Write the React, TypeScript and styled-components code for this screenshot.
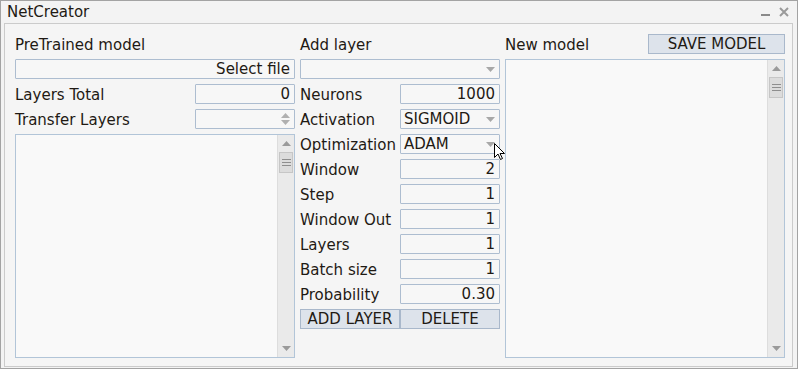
import React from "react";
import styled, { createGlobalStyle } from "styled-components";

const Global = createGlobalStyle`
  html, body { margin: 0; padding: 0; background: #ffffff; }
  * { box-sizing: border-box; }
`;

const FONT = `"DejaVu Sans", "Liberation Sans", sans-serif`;

const Window = styled.div`
  position: relative;
  width: 798px;
  height: 369px;
  border: 1px solid #a3a3a3;
  background: #f3f3f3;
  display: flex;
  flex-direction: column;
  padding: 0 4px 1px 3px;
  font-family: ${FONT};
  color: #1f1a14;
`;

const TitleBar = styled.div`
  height: 22px;
  display: flex;
  align-items: center;
  justify-content: space-between;
  padding: 0 4px 0 3px;
`;

const Title = styled.span`
  font-size: 15px;
`;

const Controls = styled.div`
  display: flex;
  align-items: center;
  gap: 8px;
`;

const Panel = styled.div`
  flex: 1;
  border: 1px solid #cbcbcb;
  background: #f5f5f5;
  padding: 10px 8px 8px 10px;
  display: grid;
  grid-template-columns: 280px 200px 280px;
  column-gap: 5px;
`;

const Column = styled.div`
  display: flex;
  flex-direction: column;
  gap: 5px;
  min-height: 0;
`;

const Header = styled.div`
  height: 20px;
  display: flex;
  align-items: center;
  justify-content: space-between;
`;

const Label = styled.span`
  font-size: 15px;
  white-space: nowrap;
  padding-top: 1px;
`;

const Row = styled.div`
  height: 20px;
  display: flex;
  align-items: center;
  justify-content: space-between;
`;

const Field = styled.div<{ $width?: number; $align?: "left" | "right" }>`
  position: relative;
  width: ${(p) => (p.$width ? `${p.$width}px` : "100%")};
  height: 20px;
  border: 1px solid #adbdd0;
  border-radius: 1px;
  background: #f7f7f7;
  display: flex;
  align-items: center;
  justify-content: ${(p) => (p.$align === "left" ? "flex-start" : "flex-end")};
  padding: 0 ${(p) => (p.$align === "left" ? "3px" : "4px")};
  font-size: 15px;
  white-space: nowrap;
`;

const ArrowSlot = styled.span`
  position: absolute;
  right: 4px;
  top: 0;
  bottom: 0;
  display: flex;
  flex-direction: column;
  justify-content: center;
  gap: 2px;
`;

const Button = styled.div<{ $width: number }>`
  width: ${(p) => p.$width}px;
  height: 20px;
  border: 1px solid #a9b8cb;
  background: #dde3eb;
  display: flex;
  align-items: center;
  justify-content: center;
  font-size: 15px;
  white-space: nowrap;
`;

const ButtonRow = styled.div`
  height: 20px;
  display: flex;
`;

const ListBox = styled.div`
  flex: 1;
  border: 1px solid #b2c5d8;
  background: #f9f9f9;
  display: flex;
  justify-content: flex-end;
`;

const ScrollBar = styled.div`
  width: 17px;
  background: #eaeaea;
  border-left: 1px solid #dddddd;
  display: flex;
  flex-direction: column;
  align-items: stretch;
`;

const ScrollArrow = styled.div`
  height: 17px;
  display: flex;
  align-items: center;
  justify-content: center;
`;

const Thumb = styled.div`
  height: 21px;
  margin: 0 1px;
  background: #dcdcdc;
  border: 1px solid #c6c6c6;
  display: flex;
  flex-direction: column;
  justify-content: center;
  align-items: center;
  gap: 2px;
`;

const Grip = styled.span`
  width: 9px;
  height: 1px;
  background: #8e8e8e;
`;

const Spacer = styled.div`
  flex: 1;
`;

const Cursor = styled.svg`
  position: absolute;
  left: 493px;
  top: 142px;
`;

const Down = ({ c = "#9a9a9a" }: { c?: string }) => (
  <svg width="9" height="5" viewBox="0 0 9 5">
    <path d="M0 0 H9 L4.5 5 Z" fill={c} />
  </svg>
);
const Up = ({ c = "#9a9a9a" }: { c?: string }) => (
  <svg width="9" height="5" viewBox="0 0 9 5">
    <path d="M0 5 H9 L4.5 0 Z" fill={c} />
  </svg>
);

const Scroll = () => (
  <ScrollBar>
    <ScrollArrow>
      <Up />
    </ScrollArrow>
    <Thumb>
      <Grip />
      <Grip />
      <Grip />
    </Thumb>
    <Spacer />
    <ScrollArrow>
      <Down />
    </ScrollArrow>
  </ScrollBar>
);

const Combo = ({ value, width }: { value: string; width?: number }) => (
  <Field $width={width} $align="left">
    {value}
    <ArrowSlot>
      <Down c="#a8a8a8" />
    </ArrowSlot>
  </Field>
);

const params: [string, string][] = [
  ["Window", "2"],
  ["Step", "1"],
  ["Window Out", "1"],
  ["Layers", "1"],
  ["Batch size", "1"],
  ["Probability", "0.30"],
];

export default function App() {
  return (
    <>
      <Global />
      <Window>
        <TitleBar>
          <Title>NetCreator</Title>
          <Controls>
            <svg width="10" height="10" viewBox="0 0 10 10">
              <rect x="0" y="7" width="9" height="2" fill="#8a8a8a" />
            </svg>
            <svg width="10" height="10" viewBox="0 0 10 10">
              <path d="M1 1 L9 9 M9 1 L1 9" stroke="#9a9a9a" strokeWidth="2" />
            </svg>
          </Controls>
        </TitleBar>
        <Panel>
          <Column>
            <Header>
              <Label>PreTrained model</Label>
            </Header>
            <Field>Select file</Field>
            <Row>
              <Label>Layers Total</Label>
              <Field $width={100}>0</Field>
            </Row>
            <Row>
              <Label>Transfer Layers</Label>
              <Field $width={100}>
                <ArrowSlot>
                  <Up c="#b0b0b0" />
                  <Down c="#b0b0b0" />
                </ArrowSlot>
              </Field>
            </Row>
            <ListBox>
              <Scroll />
            </ListBox>
          </Column>
          <Column>
            <Header>
              <Label>Add layer</Label>
            </Header>
            <Combo value="" />
            <Row>
              <Label>Neurons</Label>
              <Field $width={100}>1000</Field>
            </Row>
            <Row>
              <Label>Activation</Label>
              <Combo value="SIGMOID" width={100} />
            </Row>
            <Row>
              <Label>Optimization</Label>
              <Combo value="ADAM" width={100} />
            </Row>
            {params.map(([k, v]) => (
              <Row key={k}>
                <Label>{k}</Label>
                <Field $width={100}>{v}</Field>
              </Row>
            ))}
            <ButtonRow>
              <Button $width={100}>ADD LAYER</Button>
              <Button $width={100}>DELETE</Button>
            </ButtonRow>
          </Column>
          <Column>
            <Header>
              <Label>New model</Label>
              <Button $width={137}>SAVE MODEL</Button>
            </Header>
            <ListBox>
              <Scroll />
            </ListBox>
          </Column>
        </Panel>
        <Cursor width="13" height="18" viewBox="0 0 13 18">
          <path
            d="M0.5 0.5 V14.5 L4 11 L6.5 16.5 L8.5 15.5 L6 10.5 H10.5 Z"
            fill="#ffffff"
            stroke="#000000"
            strokeWidth="1"
          />
        </Cursor>
      </Window>
    </>
  );
}
